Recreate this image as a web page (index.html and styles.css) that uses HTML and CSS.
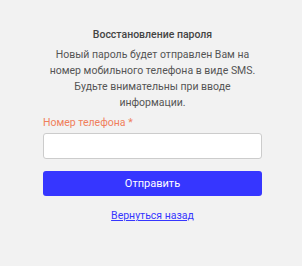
FILE: index.html
```html
<!DOCTYPE html>
<html lang="ru">
<head>
<meta charset="utf-8">
<link rel="stylesheet" href="styles.css">
</head>
<body>
<div class="page">
  <form class="recover">
    <h1 class="title">Восстановление пароля</h1>
    <p class="desc">Новый пароль будет отправлен Вам на номер мобильного телефона в виде SMS. Будьте внимательны при вводе информации.</p>
    <label class="label" for="phone">Номер телефона *</label>
    <input class="input" id="phone" type="text">
    <button class="submit" type="button">Отправить</button>
    <a class="back" href="#">Вернуться назад</a>
  </form>
</div>
</body>
</html>
```
FILE: styles.css
```css
html, body {
  margin: 0;
  padding: 0;
  background: #f2f2f2;
  font-family: Roboto, "Liberation Sans", sans-serif;
}
.page {
  width: 302px;
  height: 266px;
  padding-left: 43px;
  box-sizing: border-box;
}
.recover {
  width: 219px;
  padding-top: 28px;
  display: flex;
  flex-direction: column;
}
.title {
  margin: 0;
  font-size: 10.5px;
  font-weight: 500;
  line-height: 14px;
  color: #444;
  text-align: center;
}
.desc {
  margin: 5px 0 0;
  font-size: 10.5px;
  line-height: 16px;
  color: #555;
  text-align: center;
}
.label {
  margin-top: 5px;
  font-size: 10.5px;
  line-height: 14px;
  color: #f07f5c;
}
.input {
  margin-top: 3px;
  height: 26px;
  box-sizing: border-box;
  border: 1px solid #ccc;
  border-radius: 3px;
  background: #fff;
  padding: 0 8px;
}
.submit {
  margin-top: 12px;
  height: 25px;
  border: 0;
  border-radius: 3px;
  background: #3636ff;
  color: #fff;
  font-family: inherit;
  font-size: 11px;
  padding: 0;
}
.back {
  margin-top: 13px;
  align-self: center;
  font-size: 10.5px;
  line-height: 14px;
  color: #3636ff;
}
```
